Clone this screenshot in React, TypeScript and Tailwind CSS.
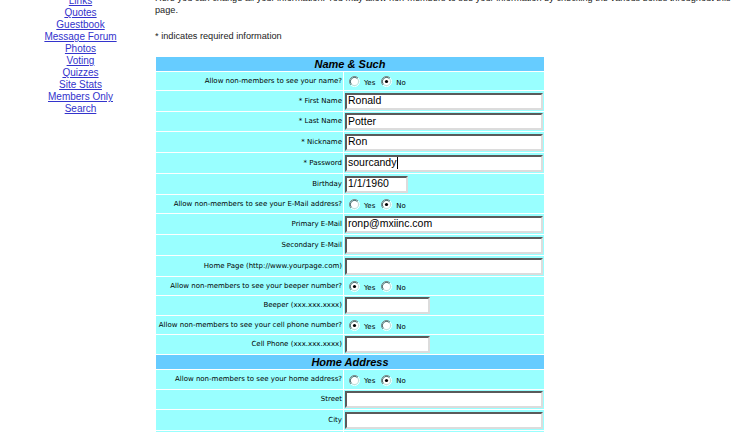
import type { ReactNode } from "react";

const navLinks = [
  "Links",
  "Quotes",
  "Guestbook",
  "Message Forum",
  "Photos",
  "Voting",
  "Quizzes",
  "Site Stats",
  "Members Only",
  "Search",
];

function Radio({ checked }: { checked?: boolean }) {
  return (
    <svg width="11" height="11" viewBox="0 0 11 11" className="shrink-0">
      <path d="M1.964 9.036 A5 5 0 0 1 9.036 1.964" fill="none" stroke="#808080" />
      <path d="M9.036 1.964 A5 5 0 0 1 1.964 9.036" fill="none" stroke="#ffffff" />
      <path d="M2.672 8.328 A4 4 0 0 1 8.328 2.672" fill="none" stroke="#404040" />
      <path d="M8.328 2.672 A4 4 0 0 1 2.672 8.328" fill="none" stroke="#d4d0c8" />
      <circle cx="5.5" cy="5.5" r="3.5" fill="#ffffff" />
      {checked && <circle cx="5.5" cy="5.5" r="1.6" fill="#000000" />}
    </svg>
  );
}

function YesNo({ yes }: { yes: boolean }) {
  return (
    <div className="flex items-center pl-[4px] pt-[1px]">
      <Radio checked={yes} />
      <span className="ml-[4px] mr-[6px] mt-[3px]">Yes</span>
      <Radio checked={!yes} />
      <span className="ml-[4px] mt-[3px]">No</span>
    </div>
  );
}

function Field({ value, width = "w-[198px]", caret }: { value?: string; width?: string; caret?: boolean }) {
  return (
    <div
      className={`${width} flex h-[17px] items-center border-2 border-t-[#5a5a5a] border-l-[#5a5a5a] border-b-[#dcdcdc] border-r-[#dcdcdc] bg-white pl-[1px] font-['Liberation_Sans',Arial,sans-serif] text-[10.5px] text-black`}
    >
      {value}
      {caret && <span className="ml-px inline-block h-[12px] w-px bg-black" />}
    </div>
  );
}

function Row({ label, h, children }: { label: string; h: string; children: ReactNode }) {
  return (
    <div className={`flex gap-px ${h}`}>
      <div className="flex w-[187px] items-center justify-end whitespace-nowrap bg-[#99ffff] pr-[1px]">{label}</div>
      <div className="flex flex-1 items-center bg-[#99ffff] pl-[1px]">{children}</div>
    </div>
  );
}

function Header({ title }: { title: string }) {
  return (
    <div className="flex h-[14px] items-center justify-center bg-[#66ccff] font-['Liberation_Sans',Arial,sans-serif] text-[11px] font-bold italic text-black">
      {title}
    </div>
  );
}

export default function App() {
  return (
    <div className="h-[432px] w-[750px] overflow-hidden bg-white">
      <div className="-mt-[8px] flex items-start">
        <nav className="ml-[10px] mt-[3px] flex w-[141px] flex-col items-center font-['Liberation_Sans',Arial,sans-serif] text-[10px] leading-[12px]">
          {navLinks.map((l) => (
            <a key={l} href="#" className="text-[#3333cc] underline">
              {l}
            </a>
          ))}
        </nav>

        <main className="ml-[4px] flex-1">
          <p className="whitespace-nowrap font-['Liberation_Sans',Arial,sans-serif] text-[9.2px] leading-[12px] text-[#222]">
            Here you can change all your information. You may allow non-members to see your information by checking the various boxes throughout this
            <br />
            page.
          </p>
          <p className="mt-[14px] font-['Liberation_Sans',Arial,sans-serif] text-[9.2px] leading-[12px] text-[#222]">
            * indicates required information
          </p>

          <div className="ml-px mt-[15px] flex w-[388px] flex-col gap-px font-['DejaVu_Sans',Verdana,sans-serif] text-[7px] text-black">
            <Header title="Name & Such" />
            <Row label="Allow non-members to see your name?" h="h-[18px]">
              <YesNo yes={false} />
            </Row>
            <Row label="* First Name" h="h-[20px]">
              <Field value="Ronald" />
            </Row>
            <Row label="* Last Name" h="h-[19px]">
              <Field value="Potter" />
            </Row>
            <Row label="* Nickname" h="h-[20px]">
              <Field value="Ron" />
            </Row>
            <Row label="* Password" h="h-[20px]">
              <Field value="sourcandy" caret />
            </Row>
            <Row label="Birthday" h="h-[20px]">
              <Field value="1/1/1960" width="w-[63px]" />
            </Row>
            <Row label="Allow non-members to see your E-Mail address?" h="h-[18px]">
              <YesNo yes={false} />
            </Row>
            <Row label="Primary E-Mail" h="h-[20px]">
              <Field value="ronp@mxiinc.com" />
            </Row>
            <Row label="Secondary E-Mail" h="h-[20px]">
              <Field />
            </Row>
            <Row label="Home Page (http://www.yourpage.com)" h="h-[20px]">
              <Field />
            </Row>
            <Row label="Allow non-members to see your beeper number?" h="h-[18px]">
              <YesNo yes />
            </Row>
            <Row label="Beeper (xxx.xxx.xxxx)" h="h-[19px]">
              <Field width="w-[85px]" />
            </Row>
            <Row label="Allow non-members to see your cell phone number?" h="h-[18px]">
              <YesNo yes />
            </Row>
            <Row label="Cell Phone (xxx.xxx.xxxx)" h="h-[19px]">
              <Field width="w-[85px]" />
            </Row>
            <Header title="Home Address" />
            <Row label="Allow non-members to see your home address?" h="h-[19px]">
              <YesNo yes={false} />
            </Row>
            <Row label="Street" h="h-[19px]">
              <Field />
            </Row>
            <Row label="City" h="h-[20px]">
              <Field />
            </Row>
            <Row label="State" h="h-[20px]">
              <Field width="w-[92px]" />
            </Row>
          </div>
        </main>
      </div>
    </div>
  );
}
